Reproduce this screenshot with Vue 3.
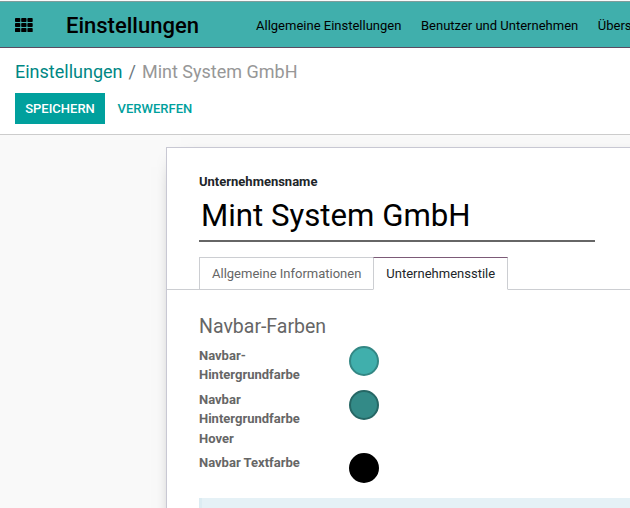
<script setup>
const menu = ['Allgemeine Einstellungen', 'Benutzer und Unternehmen', 'Übersetzungen']
const cols = [0, 6.2, 12.4]
const rows = [0, 5, 10]
const colors = [
  { label: 'Navbar-Hintergrundfarbe', fill: '#40afac', edge: '#338784' },
  { label: 'Navbar Hintergrundfarbe Hover', fill: '#338a87', edge: '#266765' },
  { label: 'Navbar Textfarbe', fill: '#000000', edge: '#000000' },
]
</script>

<template>
  <div class="app">
    <header class="navbar">
      <svg class="apps" width="18" height="14" viewBox="0 0 18 14">
        <template v-for="y in rows" :key="y">
          <rect v-for="x in cols" :key="x" :x="x" :y="y" width="5.3" height="4.1" rx="0.8" />
        </template>
      </svg>
      <span class="brand">Einstellungen</span>
      <nav class="menu">
        <a v-for="m in menu" :key="m">{{ m }}</a>
      </nav>
    </header>

    <section class="control">
      <div class="crumbs">
        <a>Einstellungen</a><span class="sep">/</span><span class="current">Mint System GmbH</span>
      </div>
      <div class="buttons">
        <button class="primary">SPEICHERN</button>
        <button class="link">VERWERFEN</button>
      </div>
    </section>

    <main class="content">
      <div class="sheet">
        <label class="name-label">Unternehmensname</label>
        <div class="name">Mint System GmbH</div>
        <div class="tabs">
          <div class="tab">Allgemeine Informationen</div>
          <div class="tab active">Unternehmensstile</div>
        </div>
        <h2>Navbar-Farben</h2>
        <div v-for="c in colors" :key="c.label" class="row">
          <div class="row-label">{{ c.label }}</div>
          <div class="swatch" :style="{ background: c.fill, borderColor: c.edge }"></div>
        </div>
        <div class="alert"></div>
      </div>
    </main>
  </div>
</template>

<style>
body {
  overflow: hidden;
}
</style>

<style scoped>
* {
  box-sizing: border-box;
}
.app {
  width: 100%;
  height: 508px;
  overflow: hidden;
  display: flex;
  flex-direction: column;
  font: 13px/19.5px Roboto, sans-serif;
  background: #f9f9f9;
}
.navbar {
  flex: none;
  height: 48px;
  display: flex;
  align-items: center;
  padding: 4px 0 0 15px;
  background: #40afac;
  border-top: 1px solid #fafafa;
  border-bottom: 1px solid #5b4b62;
  box-shadow: inset 0 1px #809c9b;
  color: #000;
  white-space: nowrap;
}
.apps {
  flex: none;
  display: block;
  margin-bottom: 2px;
}
.brand {
  flex: none;
  width: 190px;
  margin-left: 33px;
  font-size: 22px;
  font-weight: 500;
  line-height: 30px;
}
.menu {
  display: flex;
  gap: 19.6px;
}
.control {
  flex: none;
  height: 87px;
  padding: 10px 15px 0;
  background: #fff;
  border-bottom: 1px solid #ccc;
}
.crumbs {
  font-size: 18px;
  line-height: 27px;
  color: #008784;
}
.sep {
  padding: 0 6px;
  color: #6c757d;
}
.current {
  color: #979797;
}
.buttons {
  display: flex;
  margin-top: 8px;
}
button {
  height: 31px;
  padding: 0;
  border: 0;
  font: 500 13px/31px Roboto, sans-serif;
}
.primary {
  width: 90px;
  background: #00a09d;
  color: #fff;
}
.link {
  margin-left: 12.6px;
  background: none;
  color: #00a09d;
}
.content {
  flex: 1;
  padding: 12px 0 0 166px;
}
.sheet {
  width: 700px;
  height: 600px;
  padding: 24px 32px 0;
  background: #fff;
  border: 1px solid #c8c8d3;
  box-shadow: 0 5px 20px -15px #000;
}
.name-label {
  display: block;
  font-weight: 700;
  color: #212529;
}
.name {
  width: 396px;
  height: 50px;
  padding: 1px 2px 0;
  border-bottom: 2px solid #666;
  font-size: 31.2px;
  line-height: 46px;
  color: #000;
}
.tabs {
  display: flex;
  height: 33px;
  margin: 15px -32px 0;
  padding-left: 32px;
  box-shadow: inset 0 -1px #ccced2;
}
.tab {
  padding: 6px 12px 0;
  border: 1px solid #ccced2;
  color: #666;
}
.tab + .tab {
  margin-left: -1px;
}
.active {
  background: #fff;
  border-top-color: #7c5a77;
  border-bottom-color: #fff;
  color: #212529;
}
h2 {
  margin: 22px 0 5px;
  font-size: 19.5px;
  font-weight: 400;
  line-height: 29px;
  color: #666;
}
.row {
  display: flex;
  margin-bottom: 5px;
}
.row-label {
  width: 150px;
  padding-right: 40px;
  font-weight: 700;
  color: #666;
}
.swatch {
  width: 30px;
  height: 30px;
  border: 2px solid;
  border-radius: 50%;
}
.alert {
  height: 80px;
  margin-top: 15px;
  background: #e5f1f6;
  border-left: 3px solid #dcecf2;
}
</style>
